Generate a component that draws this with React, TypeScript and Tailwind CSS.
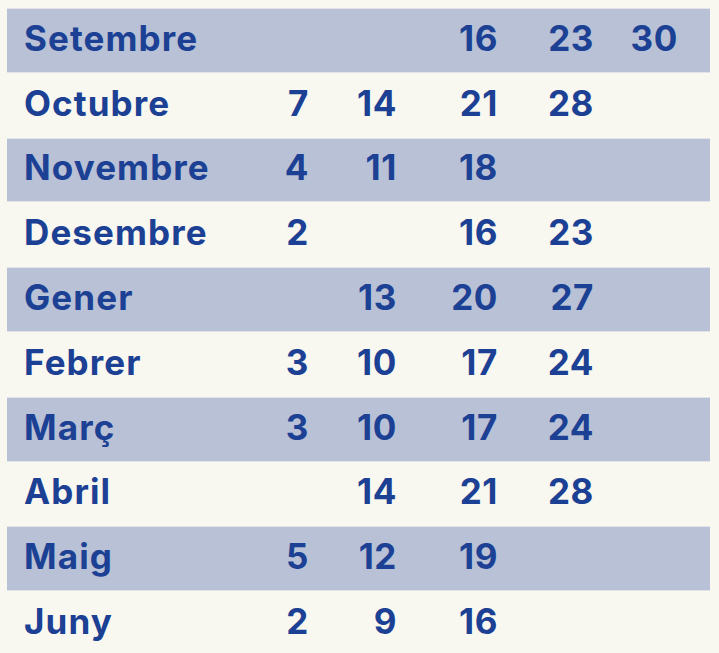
import React from "react";

// calendar rows: month name + up to five days
const rows: { month: string; days: (number | null)[] }[] = [
  { month: "Setembre", days: [null, null, 16, 23, 30] },
  { month: "Octubre", days: [7, 14, 21, 28, null] },
  { month: "Novembre", days: [4, 11, 18, null, null] },
  { month: "Desembre", days: [2, null, 16, 23, null] },
  { month: "Gener", days: [null, 13, 20, 27, null] },
  { month: "Febrer", days: [3, 10, 17, 24, null] },
  { month: "Març", days: [3, 10, 17, 24, null] },
  { month: "Abril", days: [null, 14, 21, 28, null] },
  { month: "Maig", days: [5, 12, 19, null, null] },
  { month: "Juny", days: [2, 9, 16, null, null] },
];

export default function App() {
  return (
    <div className="w-[719px] h-[653px] overflow-hidden bg-[#f8f7f0] pt-[8px] pl-[7px] pr-[9px] font-['Inter',sans-serif] text-[#1b4094]">
      {rows.map((r, i) => (
        <div
          key={r.month}
          className={
            i % 2 === 0
              ? "h-[64.8px] border-y border-[#e2e3e8] bg-[#b8c1d5] grid grid-cols-[225px_60px_88px_101px_96px_84px] items-center pl-[17px] pb-[4px]"
              : "h-[64.8px] grid grid-cols-[225px_60px_88px_101px_96px_84px] items-center pl-[17px] pb-[4px]"
          }
        >
          <span className="text-[35px] font-bold tracking-[1.1px] leading-none">{r.month}</span>
          {r.days.map((d, j) => (
            <span key={j} className="text-[35px] font-bold tracking-[0.6px] leading-none text-right">
              {d ?? ""}
            </span>
          ))}
        </div>
      ))}
    </div>
  );
}
